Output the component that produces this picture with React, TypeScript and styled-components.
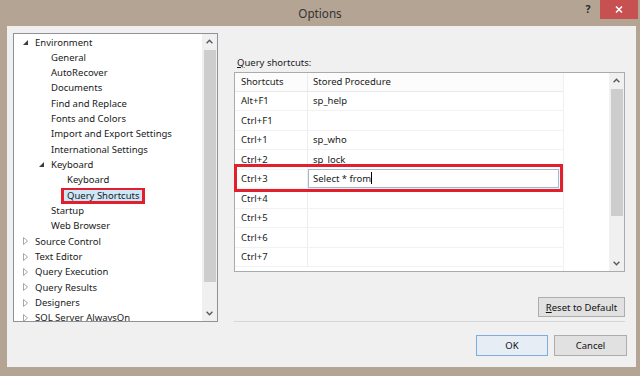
import React from "react";
import styled, { createGlobalStyle } from "styled-components";

const FONT = `"Noto Sans", "Open Sans", "DejaVu Sans", sans-serif`;

const GlobalStyle = createGlobalStyle`
  html, body { margin: 0; padding: 0; background: #b3a494; }
  body { font-family: ${FONT}; font-size: 9.5px; color: #1a1a1a; }
  * { box-sizing: border-box; }
`;

const Window = styled.div`
  width: 640px;
  height: 376px;
  background: #b3a494;
  display: flex;
  flex-direction: column;
  overflow: hidden;
`;

const TitleBar = styled.div`
  height: 26px;
  flex-shrink: 0;
  display: grid;
  grid-template-columns: 1fr auto 1fr;
  align-items: start;
`;

const Title = styled.div`
  grid-column: 2;
  font-size: 11.7px;
  line-height: 15px;
  padding-top: 6px;
  color: #333;
`;

const TitleControls = styled.div`
  grid-column: 3;
  justify-self: end;
  display: flex;
  align-items: flex-start;
  margin-right: 2px;
`;

const HelpButton = styled.div`
  width: 16px;
  height: 19px;
  margin-right: 4px;
  line-height: 19px;
  text-align: center;
  font-weight: bold;
  font-size: 10.5px;
  color: #2a2a2a;
`;

const CloseButton = styled.div`
  width: 38px;
  height: 19px;
  background: #c75050;
  display: flex;
  align-items: center;
  justify-content: center;
`;

const Content = styled.div`
  flex: 1;
  margin: 0 4px 9px 7px;
  background: #f0f0f0;
  padding: 7px 0 0 6px;
  display: flex;
  flex-direction: column;
`;

const Main = styled.div`
  height: 289px;
  display: flex;
  padding-right: 11px;
`;

const TreePanel = styled.div`
  width: 205px;
  border: 1px solid #8e9399;
  background: #fff;
  display: flex;
`;

const TreeList = styled.div`
  flex: 1;
  overflow: hidden;
  padding-top: 0.5px;
`;

const TreeRow = styled.div<{ $level: number }>`
  height: 15.33px;
  line-height: 15.33px;
  display: flex;
  align-items: center;
  padding-left: ${(p) => 9 + p.$level * 16}px;
  white-space: nowrap;
`;

const ArrowSlot = styled.span`
  width: 12px;
  flex-shrink: 0;
  display: flex;
  align-items: center;
`;

const SelectedLabel = styled.span`
  position: relative;
  display: inline-block;
  background: #cde6f8;
  margin-left: -6px;
  padding: 0 5px 0 6px;
  &::after {
    content: "";
    position: absolute;
    top: 0;
    bottom: -1px;
    left: 0;
    right: 0;
    border: 3px solid #e2202d;
    border-top-width: 2.5px;
  }
`;

const ScrollBar = styled.div`
  width: 15px;
  flex-shrink: 0;
  background: #f0f0f0;
  display: flex;
  flex-direction: column;
`;

const ScrollArrow = styled.div`
  height: 15px;
  flex-shrink: 0;
  display: flex;
  align-items: center;
  justify-content: center;
`;

const Thumb = styled.div<{ $h: number }>`
  height: ${(p) => p.$h}px;
  margin: 1px 1px 0 2px;
  background: #cdcdcd;
  flex-shrink: 0;
`;

const Track = styled.div`
  flex: 1;
`;

const RightPanel = styled.div`
  flex: 1;
  margin-left: 16px;
  display: flex;
  flex-direction: column;
`;

const GroupLabel = styled.div`
  padding: 22px 0 0 3px;
  line-height: 15px;
  height: 39px;
`;

const TableWrap = styled.div`
  position: relative;
  height: 200px;
`;

const TableBox = styled.div`
  height: 200px;
  border: 1px solid #a8abb0;
  background: #fff;
  display: flex;
  overflow: hidden;
`;

const Rows = styled.div`
  width: 329px;
  flex-shrink: 0;
  overflow: hidden;
  border-right: 1px solid #f0f0f0;
`;

const Filler = styled.div`
  flex: 1;
`;

const Row = styled.div<{ $header?: boolean }>`
  height: ${(p) => (p.$header ? 18.5 : 19.5)}px;
  display: grid;
  grid-template-columns: 73px 1fr;
  border-bottom: 1px solid ${(p) => (p.$header ? "#e8e8e8" : "#f2f2f2")};
  background: ${(p) => (p.$header ? "#fcfcfc" : "#fff")};
`;

const Cell = styled.div<{ $first?: boolean }>`
  display: flex;
  align-items: center;
  padding-left: ${(p) => (p.$first ? 6 : 5)}px;
  border-right: ${(p) => (p.$first ? "1px solid #ececec" : "none")};
  white-space: nowrap;
`;

const EditCell = styled.div`
  display: flex;
  align-items: stretch;
  padding-right: 4px;
`;

const EditBox = styled.div`
  flex: 1;
  margin: -1px 0 0 0;
  border: 1px solid #a3b9d1;
  background: #fff;
  padding-left: 4px;
  display: flex;
  align-items: center;
`;

const Caret = styled.span`
  display: inline-block;
  width: 1px;
  height: 12px;
  background: #000;
`;

const Annotation = styled.div`
  position: absolute;
  top: 92px;
  left: 0;
  width: 329px;
  height: 28px;
  border: 3px solid #e2202d;
  pointer-events: none;
`;

const ResetRow = styled.div`
  display: flex;
  justify-content: flex-end;
  margin-top: 25px;
`;

const Separator = styled.div`
  margin-top: 4px;
  height: 1px;
  background: #d6d6d6;
`;

const Footer = styled.div`
  display: flex;
  justify-content: flex-end;
  gap: 6px;
  padding: 13px 9px 0 0;
`;

const PushButton = styled.button<{ $w: number; $h: number; $primary?: boolean }>`
  width: ${(p) => p.$w}px;
  height: ${(p) => p.$h}px;
  font-family: ${FONT};
  font-size: 9.5px;
  color: #111;
  padding: 0;
  border: 1px solid ${(p) => (p.$primary ? "#7eaedc" : "#adadad")};
  background: ${(p) => (p.$primary ? "#e6edf4" : "#e1e1e1")};
  display: flex;
  align-items: center;
  justify-content: center;
`;

const OpenArrow = () => (
  <svg width="5" height="5" viewBox="0 0 5 5">
    <polygon points="5,0 5,5 0,5" fill="#3c3c3c" />
  </svg>
);

const ClosedArrow = () => (
  <svg width="5" height="8" viewBox="0 0 5 8">
    <polygon points="0.5,0.5 4.5,4 0.5,7.5" fill="none" stroke="#a6a6a6" strokeWidth="1" />
  </svg>
);

const Chevron = ({ down }: { down?: boolean }) => (
  <svg width="7" height="5" viewBox="0 0 7 5">
    <path
      d={down ? "M0.6 0.8 L3.5 3.8 L6.4 0.8" : "M0.6 4.2 L3.5 1.2 L6.4 4.2"}
      fill="none"
      stroke="#5a5a5a"
      strokeWidth="1.4"
    />
  </svg>
);

type TreeItem = { label: string; level: number; arrow?: "open" | "closed"; selected?: boolean };

const tree: TreeItem[] = [
  { label: "Environment", level: 0, arrow: "open" },
  { label: "General", level: 1 },
  { label: "AutoRecover", level: 1 },
  { label: "Documents", level: 1 },
  { label: "Find and Replace", level: 1 },
  { label: "Fonts and Colors", level: 1 },
  { label: "Import and Export Settings", level: 1 },
  { label: "International Settings", level: 1 },
  { label: "Keyboard", level: 1, arrow: "open" },
  { label: "Keyboard", level: 2 },
  { label: "Query Shortcuts", level: 2, selected: true },
  { label: "Startup", level: 1 },
  { label: "Web Browser", level: 1 },
  { label: "Source Control", level: 0, arrow: "closed" },
  { label: "Text Editor", level: 0, arrow: "closed" },
  { label: "Query Execution", level: 0, arrow: "closed" },
  { label: "Query Results", level: 0, arrow: "closed" },
  { label: "Designers", level: 0, arrow: "closed" },
  { label: "SQL Server AlwaysOn", level: 0, arrow: "closed" },
];

const shortcuts: [string, string][] = [
  ["Alt+F1", "sp_help"],
  ["Ctrl+F1", ""],
  ["Ctrl+1", "sp_who"],
  ["Ctrl+2", "sp_lock"],
  ["Ctrl+3", "Select * from"],
  ["Ctrl+4", ""],
  ["Ctrl+5", ""],
  ["Ctrl+6", ""],
  ["Ctrl+7", ""],
];

export default function App() {
  return (
    <>
      <GlobalStyle />
      <Window>
        <TitleBar>
          <Title>Options</Title>
          <TitleControls>
            <HelpButton>?</HelpButton>
            <CloseButton>
              <svg width="8" height="7" viewBox="0 0 8 7">
                <path d="M1 0.5 L7 6.5 M7 0.5 L1 6.5" stroke="#fff" strokeWidth="1.5" />
              </svg>
            </CloseButton>
          </TitleControls>
        </TitleBar>
        <Content>
          <Main>
            <TreePanel>
              <TreeList>
                {tree.map((t, i) => (
                  <TreeRow key={i} $level={t.level}>
                    <ArrowSlot>
                      {t.arrow === "open" && <OpenArrow />}
                      {t.arrow === "closed" && <ClosedArrow />}
                    </ArrowSlot>
                    {t.selected ? <SelectedLabel>{t.label}</SelectedLabel> : <span>{t.label}</span>}
                  </TreeRow>
                ))}
              </TreeList>
              <ScrollBar>
                <ScrollArrow>
                  <Chevron />
                </ScrollArrow>
                <Thumb $h={232} />
                <Track />
                <ScrollArrow>
                  <Chevron down />
                </ScrollArrow>
              </ScrollBar>
            </TreePanel>
            <RightPanel>
              <GroupLabel>
                <u>Q</u>uery shortcuts:
              </GroupLabel>
              <TableWrap>
                <TableBox>
                  <Rows>
                    <Row $header>
                      <Cell $first>Shortcuts</Cell>
                      <Cell>Stored Procedure</Cell>
                    </Row>
                    {shortcuts.map(([k, v], i) => (
                      <Row key={k}>
                        <Cell $first>{k}</Cell>
                        {i === 4 ? (
                          <EditCell>
                            <EditBox>
                              {v}
                              <Caret />
                            </EditBox>
                          </EditCell>
                        ) : (
                          <Cell>{v}</Cell>
                        )}
                      </Row>
                    ))}
                  </Rows>
                  <Filler />
                  <ScrollBar>
                    <ScrollArrow>
                      <Chevron />
                    </ScrollArrow>
                    <Thumb $h={127} />
                    <Track />
                    <ScrollArrow>
                      <Chevron down />
                    </ScrollArrow>
                  </ScrollBar>
                </TableBox>
                <Annotation />
              </TableWrap>
              <ResetRow>
                <PushButton $w={87} $h={20}>
                  <span>
                    <u>R</u>eset to Default
                  </span>
                </PushButton>
              </ResetRow>
              <Separator />
            </RightPanel>
          </Main>
          <Footer>
            <PushButton $w={72} $h={21} $primary>
              OK
            </PushButton>
            <PushButton $w={73} $h={21}>
              Cancel
            </PushButton>
          </Footer>
        </Content>
      </Window>
    </>
  );
}
